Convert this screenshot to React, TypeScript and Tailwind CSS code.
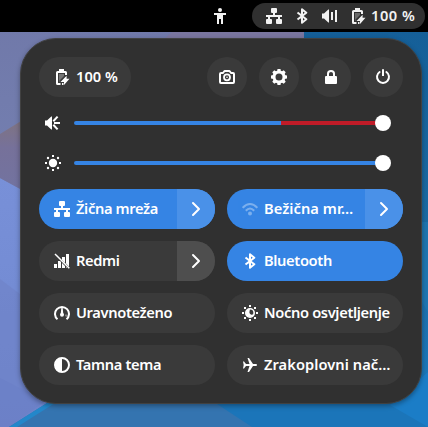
import type { ReactNode } from 'react';

function Icon({ children, className = '' }: { children: ReactNode; className?: string }) {
  return (
    <svg viewBox="0 0 16 16" fill="currentColor" className={`size-4 shrink-0 ${className}`}>
      {children}
    </svg>
  );
}

const WiredIcon = () => (
  <Icon>
    <rect x="5" y="0" width="6" height="5" rx="1" />
    <path d="M7 4.500h2V7h7v2h-2v3h-2V9H4v3H2V9H0V7h7z" />
    <rect x="0" y="11" width="6" height="5" rx="1" />
    <rect x="10" y="11" width="6" height="5" rx="1" />
  </Icon>
);

const BluetoothIcon = () => (
  <Icon>
    <path d="M3.500 4.500 12.300 11.300 8 14.800V1.200l4.300 3.500L3.500 11.500" fill="none" stroke="currentColor" strokeWidth="2" strokeLinejoin="round" />
  </Icon>
);

const VolumeIcon = () => (
  <Icon>
    <path d="M0 5.500h2L6.300 1.500H7v13h-.7L2 10.500H0z" />
    <path d="M9 4h2v8H9zM13 2h2v12h-2z" />
  </Icon>
);

const BatteryIcon = () => (
  <Icon>
    <path d="M5 2V0h5v2h1.500q1.500 0 1.500 1.500V6h-2V4H4v10h2.500v2H3.500q-1.500 0-1.500-1.500v-11Q2 2 3.500 2z" />
    <path d="M5 5h5v2L5.500 11.500V13H5z" fillOpacity=".3" />
    <path d="M12.600 6.800v3h2.900L10 16v-3H6.500zM8 14h1.500v2H8z" />
  </Icon>
);

const PersonIcon = () => (
  <Icon>
    <circle cx="8" cy="2" r="2" />
    <path d="M2 5h12v2H11v9H9v-5H7v5H5V7H2z" />
  </Icon>
);

const CameraIcon = () => (
  <Icon>
    <path d="M5.500 2h5l1.500 2h2q1 0 1 1v8q0 1-1 1H2q-1 0-1-1V5q0-1 1-1h2z" fill="none" stroke="currentColor" strokeWidth="2" strokeLinejoin="round" />
    <circle cx="8" cy="8.300" r="3" fill="none" stroke="currentColor" strokeWidth="1.800" />
    <circle cx="8" cy="8.300" r=".8" />
  </Icon>
);

const GearIcon = () => (
  <Icon>
    <circle cx="8" cy="8" r="5" fill="none" stroke="currentColor" strokeWidth="3" />
    <path d="M6.500 0h3l.5 3H6zM6.500 16h3l.5-3H6zM0 6.500v3l3 .5V6zM16 6.500v3l-3 .5V6zM3.300 1.300 1.300 3.300l1.700 2.700 3-3zM12.700 1.300l2 2L13 6l-3-3zM3.300 14.700l-2-2L3 10l3 3zM12.700 14.700l2-2L13 10l-3 3z" />
  </Icon>
);

const LockIcon = () => (
  <Icon>
    <path d="M5 8V4.700Q5 2 8 2t3 2.700V8" fill="none" stroke="currentColor" strokeWidth="2" />
    <rect x="2" y="7" width="12" height="8" rx="1" />
  </Icon>
);

const PowerIcon = () => (
  <Icon>
    <path d="M4.600 3A6 6 0 1 0 11.400 3" fill="none" stroke="currentColor" strokeWidth="2" strokeLinecap="round" />
    <path d="M7 1q0-1 1-1t1 1v6H7z" />
  </Icon>
);

const SpeakerIcon = () => (
  <Icon>
    <path d="M0 5.500h2L6.300 1.500H7v13h-.7L2 10.500H0z" />
    <path d="m8.300 6.300 4.300-4.700M9 8h6M8.300 9.700l4.300 4.700" fill="none" stroke="currentColor" strokeWidth="2" />
  </Icon>
);

const BrightnessIcon = () => (
  <Icon>
    <circle cx="8" cy="8" r="4.200" />
    <path d="M7 0h2v2H7zM7 14h2v2H7zM0 7h2v2H0zM14 7h2v2h-2z" />
    <circle cx="3" cy="3" r="1.200" />
    <circle cx="13" cy="3" r="1.200" />
    <circle cx="3" cy="13" r="1.200" />
    <circle cx="13" cy="13" r="1.200" />
  </Icon>
);

const WifiIcon = () => (
  <Icon className="opacity-35">
    <path d="M.700 6.800Q8-.800 15.300 6.800M3.800 9.800Q8 5.400 12.200 9.800" fill="none" stroke="currentColor" strokeWidth="2" />
    <circle cx="8" cy="12.500" r="2" />
  </Icon>
);

const CellularIcon = () => (
  <Icon>
    <path d="M0 11h3v4H0zM4 8h2l1 1v6H4zM8 10l3 3v2H8zM8 4h3v6L8 7zM12 1h3v12.500l-3-3zM12 14l1 1h-1z" />
    <path d="m1 1 14.300 14.300" fill="none" stroke="currentColor" strokeWidth="1.500" />
  </Icon>
);

const GaugeIcon = () => (
  <Icon>
    <path d="M3.500 14.300A7 7 0 1 1 12.500 14.300" fill="none" stroke="currentColor" strokeWidth="2" />
    <path d="M7.300 3h1.400L9.200 8q.8.700.8 1.800a2 2 0 0 1-4 0Q6 8.700 6.800 8z" />
    <path d="M11 9.500h2.500v3L11 11z" fillOpacity=".35" />
  </Icon>
);

const NightIcon = () => (
  <Icon>
    <path d="M7 0h2v2H7zM7 14h2v2H7zM0 7h2v2H0zM14 7h2v2h-2zM2 2h2v2H2zM12 2h2v2h-2zM2 12h2v2H2zM12 12h2v2h-2z" />
    <circle cx="8" cy="8" r="4.200" fill="none" stroke="currentColor" strokeWidth="1.600" />
    <path d="M8 4a4 4 0 1 0 4 4Q11.500 10 9.500 9.800 7 9 7.500 6.500z" />
  </Icon>
);

const DarkIcon = () => (
  <Icon>
    <circle cx="8" cy="8" r="7" fill="none" stroke="currentColor" strokeWidth="2" />
    <path d="M8 1v14A7 7 0 0 1 8 1z" />
  </Icon>
);

const PlaneIcon = () => (
  <Icon>
    <path d="M1 4.500h1L4 7h3.500L5.500 1H7l4 6h3q1 0 1 1t-1 1h-3l-4 6H5.500l2-6H4l-2 2.500H1L1.700 8z" />
  </Icon>
);

const ArrowIcon = () => (
  <Icon>
    <path d="m5 2 6 6-6 6" fill="none" stroke="currentColor" strokeWidth="2" strokeLinecap="round" strokeLinejoin="round" />
  </Icon>
);

function Wallpaper() {
  return (
    <svg className="absolute inset-0 -z-10 size-full" viewBox="0 0 428 427" preserveAspectRatio="none">
      <defs>
        <linearGradient id="upper" x2="0" y2="1">
          <stop offset="0" stopColor="#7078a8" />
          <stop offset="1" stopColor="#7480b2" />
        </linearGradient>
        <linearGradient id="lower" x2="0" y2="1">
          <stop offset="0" stopColor="#7890d8" />
          <stop offset="1" stopColor="#6f87cf" />
        </linearGradient>
        <linearGradient id="dusk" x2="0" y2="1">
          <stop offset="0" stopColor="#80747f" />
          <stop offset=".4" stopColor="#76719a" />
          <stop offset="1" stopColor="#7273a0" />
        </linearGradient>
        <linearGradient id="right" x2="0" y2="1">
          <stop offset="0" stopColor="#155f98" />
          <stop offset=".5" stopColor="#1b6ba3" />
          <stop offset="1" stopColor="#1c7bc0" />
        </linearGradient>
      </defs>
      <path fill="url(#upper)" d="M0 0h304v200H0z" />
      <path fill="#7a769f" d="M172 32h132v20H150z" />
      <path fill="url(#lower)" d="M0 178l40 22h264v227H0z" />
      <path fill="url(#dusk)" d="M0 134l26-16v74L0 178z" />
      <path fill="#6d7fc4" d="M0 279l40 30v118H0z" opacity=".5" />
      <path fill="#6a7fc6" d="M0 378l45 23-36 26H0z" opacity=".6" />
      <path fill="url(#right)" d="M304 32h124v395H304z" />
      <path fill="#2179b4" d="M404 222h24v90l-24-40z" opacity=".7" />
      <path fill="#3474b0" d="M9 427l38-24h170l42 24z" />
      <path fill="#2387ca" d="M9 427l38-24h8l-38 24z" />
      <path fill="#1b75b9" d="M214 402h214v25H252z" />
      <path fill="#1b7dc7" d="M390 405l38-33v55z" />
    </svg>
  );
}

const text = 'whitespace-nowrap pb-0.5 text-[14.667px] leading-5 font-semibold';

function RoundButton({ children }: { children: ReactNode }) {
  return <button className="flex size-10 items-center justify-center rounded-full bg-[#3a3a3a]">{children}</button>;
}

function Slider({ icon, over }: { icon: ReactNode; over?: boolean }) {
  return (
    <div className="flex h-10 items-center pr-3 pl-1.5">
      {icon}
      <div className="ml-[13px] flex flex-1 items-center">
        <div className="h-1 w-[207px] rounded-l-full bg-[#3584e4]" />
        <div className={`h-1 flex-1 ${over ? 'bg-[#c01c28]' : 'bg-[#3584e4]'}`} />
        <div className="-ml-px size-4 rounded-full bg-white" />
      </div>
    </div>
  );
}

function Tile({ icon, label, active, menu }: { icon: ReactNode; label: string; active?: boolean; menu?: boolean }) {
  return (
    <div className={`flex h-10 w-44 overflow-hidden rounded-full ${active ? 'bg-[#3584e4]' : 'bg-[#3a3a3a]'}`}>
      <button className="flex min-w-0 flex-1 items-center gap-1.5 pl-[15px] text-left">
        {icon}
        <span className={`${text} ${label.endsWith('…') ? 'tracking-[0.05px]' : 'tracking-[-0.35px]'}`}>{label}</span>
      </button>
      {menu && (
        <button className={`flex w-[38px] items-center justify-center ${active ? 'bg-[#4a91e8]' : 'bg-[#4e4e4e]'}`}>
          <ArrowIcon />
        </button>
      )}
    </div>
  );
}

export default function App() {
  return (
    <div className="relative isolate h-[427px] w-[428px] overflow-hidden font-['Noto_Sans',sans-serif] text-white">
      <Wallpaper />
      <header className="flex h-8 items-center justify-end bg-black pr-[3px] text-[#f2f2f2]">
        <PersonIcon />
        <div className="ml-6 flex h-[26px] w-[173px] items-center rounded-full bg-[#303030] pl-3.5">
          <WiredIcon />
          <span className="ml-3 flex"><BluetoothIcon /></span>
          <span className="ml-3 flex"><VolumeIcon /></span>
          <span className="ml-3 flex"><BatteryIcon /></span>
          <span className={`ml-[5px] tracking-[0.5px] ${text}`}>100 %</span>
        </div>
      </header>
      <main className="mt-1.5 ml-5 h-[366px] w-[402px] rounded-[36px] border border-[#414141] bg-[#303030] px-[18px] pt-[18px] shadow-[0_2px_5px_rgba(0,0,0,0.35)]">
        <div className="flex items-center gap-3">
          <button className="mr-auto flex h-10 w-[92px] items-center gap-1.5 rounded-full bg-[#3a3a3a] pl-[15px]">
            <BatteryIcon />
            <span className={text}>100 %</span>
          </button>
          <RoundButton><CameraIcon /></RoundButton>
          <RoundButton><GearIcon /></RoundButton>
          <RoundButton><LockIcon /></RoundButton>
          <RoundButton><PowerIcon /></RoundButton>
        </div>
        <div className="mt-1.5 mb-1.5">
          <Slider icon={<SpeakerIcon />} over />
          <Slider icon={<BrightnessIcon />} />
        </div>
        <div className="grid grid-cols-2 gap-3">
          <Tile icon={<WiredIcon />} label="Žična mreža" active menu />
          <Tile icon={<WifiIcon />} label="Bežična mr…" active menu />
          <Tile icon={<CellularIcon />} label="Redmi" menu />
          <Tile icon={<BluetoothIcon />} label="Bluetooth" active />
          <Tile icon={<GaugeIcon />} label="Uravnoteženo" />
          <Tile icon={<NightIcon />} label="Noćno osvjetljenje" />
          <Tile icon={<DarkIcon />} label="Tamna tema" />
          <Tile icon={<PlaneIcon />} label="Zrakoplovni nač…" />
        </div>
      </main>
    </div>
  );
}
